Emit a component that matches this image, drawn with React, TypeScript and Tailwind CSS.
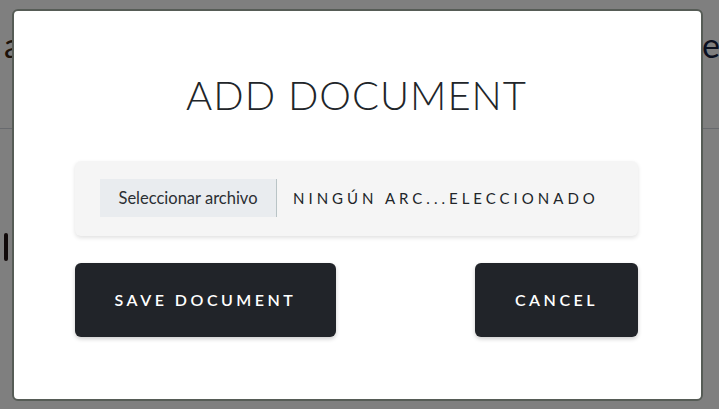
export default function App() {
  return (
    <div className="relative w-[719px] h-[409px] overflow-hidden bg-white font-['Lato',sans-serif]">
      {/* page behind the modal */}
      <div className="flex items-center justify-between h-[129px] border-b border-gray-300 pb-[40px]">
        <span className="pl-[4px] text-[34px] text-[#3a2410]">a</span>
        <span className="-mr-[1px] text-[34px] text-[#14203f]">e</span>
      </div>
      <div className="mt-[104px] ml-[4px] w-[4px] h-[28px] rounded-sm bg-[#231414]" />

      {/* overlay */}
      <div className="absolute inset-0 bg-black/50">
        <div className="ml-[12px] mt-[9px] w-[691px] h-[392px] rounded-[6px] border-2 border-[#565c56] bg-white pl-[61px] pr-[63px] pt-[60px]">
          <h1 className="text-center text-[40px] leading-[48px] font-light tracking-[1px] text-[#212529]">
            ADD DOCUMENT
          </h1>

          <div className="mt-[42px] h-[75px] rounded-[6px] bg-[#f5f5f5] shadow-[0_2px_4px_rgba(0,0,0,0.12)] pl-[25px] pt-[18px]">
            <div className="flex items-center h-[38px]">
              <div className="flex items-center justify-center w-[177px] h-full bg-[#e9ecef] border-r border-[#b9c4c6] text-[16.5px] text-[#2b2f33]">
                Seleccionar archivo
              </div>
              <span className="ml-[16px] text-[15px] tracking-[4px] text-[#212529]">
                NINGÚN ARC...ELECCIONADO
              </span>
            </div>
          </div>

          <div className="mt-[27px] flex justify-between">
            <button className="w-[261px] h-[74px] rounded-[6px] bg-[#212429] text-white text-[16px] font-semibold tracking-[3.5px] shadow-[0_2px_4px_rgba(0,0,0,0.2)]">
              SAVE DOCUMENT
            </button>
            <button className="w-[163px] h-[74px] rounded-[6px] bg-[#212429] text-white text-[16px] font-semibold tracking-[3.5px] shadow-[0_2px_4px_rgba(0,0,0,0.2)]">
              CANCEL
            </button>
          </div>
        </div>
      </div>
    </div>
  );
}
